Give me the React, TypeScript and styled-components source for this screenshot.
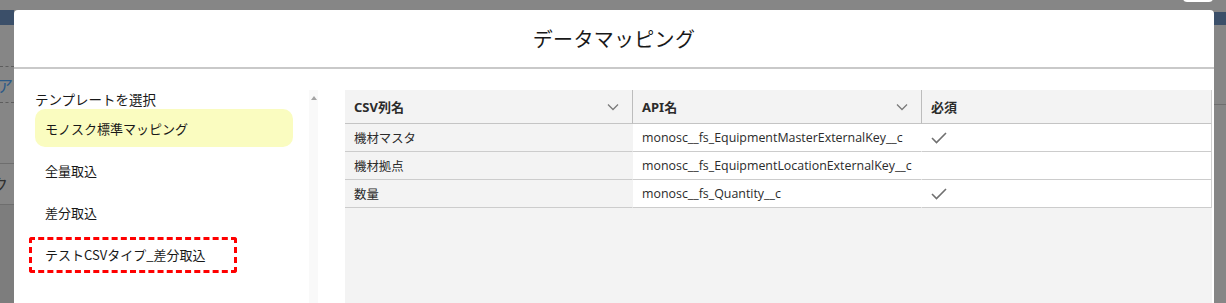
import React from 'react';
import styled, { createGlobalStyle } from 'styled-components';

const GlobalStyle = createGlobalStyle`
  html, body {
    margin: 0;
    padding: 0;
  }
  body {
    font-family: "Noto Sans", "Noto Sans CJK JP", sans-serif;
    color: #181818;
  }
`;

interface MappingRow {
  csv: string;
  api: string;
  required: boolean;
}

const templates = ['モノスク標準マッピング', '全量取込', '差分取込', 'テストCSVタイプ_差分取込'];

const rows: MappingRow[] = [
  { csv: '機材マスタ', api: 'monosc__fs_EquipmentMasterExternalKey__c', required: true },
  { csv: '機材拠点', api: 'monosc__fs_EquipmentLocationExternalKey__c', required: false },
  { csv: '数量', api: 'monosc__fs_Quantity__c', required: true },
];

const Screen = styled.div`
  position: relative;
  width: 1226px;
  height: 303px;
  overflow: hidden;
  background: #868686;
  display: grid;
  grid-template-columns: 14px 1200px 12px;
  padding-top: 10px;
  box-sizing: border-box;
`;

const BackStrip = styled.div`
  display: flex;
  flex-direction: column;
  margin-top: -10px;
  height: 303px;
  overflow: hidden;
  font-size: 16px;
`;

const BackBlock = styled.div<{ h: number; bg?: string; line?: string; dashed?: boolean }>`
  height: ${(p) => p.h}px;
  flex: none;
  background: ${(p) => p.bg || 'transparent'};
  border-bottom: ${(p) => (p.line ? `1px ${p.dashed ? 'dashed' : 'solid'} ${p.line}` : 'none')};
  display: flex;
  align-items: center;
  overflow: hidden;
  white-space: nowrap;
`;

const BackGlyph = styled.span<{ color: string; shift: number }>`
  color: ${(p) => p.color};
  margin-left: ${(p) => p.shift}px;
  font-family: "Noto Sans CJK JP", sans-serif;
  font-size: 16px;
`;

const CloseTab = styled.div`
  position: absolute;
  left: 1183px;
  top: -6px;
  width: 30px;
  height: 8px;
  background: #ffffff;
  border-radius: 4px;
`;

const Modal = styled.div`
  background: #ffffff;
  border-radius: 4px 4px 0 0;
  display: flex;
  flex-direction: column;
  height: 293px;
  overflow: hidden;
`;

const Header = styled.div`
  height: 57px;
  flex: none;
  border-bottom: 2px solid #c9c9c9;
  display: flex;
  align-items: center;
  justify-content: center;
`;

const Title = styled.h2`
  margin: 0;
  font-family: "Noto Sans CJK JP", sans-serif;
  font-weight: 400;
  font-size: 20px;
  letter-spacing: 0.3px;
  color: #181818;
`;

const Body = styled.div`
  flex: 1;
  display: flex;
  min-height: 0;
`;

const Sidebar = styled.div`
  width: 295px;
  flex: none;
  padding: 21px 0 0 21px;
  box-sizing: border-box;
  font-family: "Noto Sans CJK JP", sans-serif;
  font-size: 13px;
`;

const SidebarLabel = styled.div`
  font-size: 13.5px;
  line-height: 19px;
  color: #181818;
`;

const TemplateList = styled.ul`
  list-style: none;
  margin: 0;
  padding: 0;
  display: flex;
  flex-direction: column;
  gap: 4px;
`;

const TemplateItem = styled.li<{ selected?: boolean }>`
  width: 258px;
  height: 38px;
  box-sizing: border-box;
  padding-left: 10px;
  display: flex;
  align-items: center;
  border-radius: 10px;
  background: ${(p) => (p.selected ? '#fafcc0' : 'transparent')};
  color: #181818;
`;

const Annotated = styled.span`
  display: flex;
  align-items: center;
  width: 208px;
  height: 36px;
  box-sizing: border-box;
  margin-left: -16px;
  margin-top: 1px;
  padding-left: 13px;
  border: 3px dashed #ff0000;
  border-radius: 3px;
`;

const ScrollTrack = styled.div`
  width: 9px;
  flex: none;
  margin-top: 21px;
  background: #f9f9f9;
  display: flex;
  justify-content: center;
  padding-top: 6px;
`;

const ScrollArrow = styled.div`
  width: 0;
  height: 0;
  border-left: 3.5px solid transparent;
  border-right: 3.5px solid transparent;
  border-bottom: 4px solid #a3a3a3;
`;

const TableArea = styled.div`
  margin: 21px 0 0 27px;
  width: 867px;
  flex: none;
  background: #f3f3f3;
`;

const Table = styled.div`
  display: grid;
  grid-template-columns: 288px 289px 290px;
  font-size: 13px;
`;

const HeadCell = styled.div<{ divider?: boolean }>`
  height: 34px;
  box-sizing: border-box;
  border-bottom: 1px solid #c4c4c4;
  border-right: 1px solid ${(p) => (p.divider ? '#bcbcbc' : '#cfcfcf')};
  padding: 0 13px 0 9px;
  display: flex;
  align-items: center;
  justify-content: space-between;
  font-weight: 700;
  color: #2b2b2b;
  font-family: "Noto Sans", "Noto Sans CJK JP", sans-serif;
`;

const Cell = styled.div<{ tone: 'gray' | 'white'; last?: boolean }>`
  height: 28px;
  box-sizing: border-box;
  border-bottom: 1px solid #cccccc;
  border-right: 1px solid ${(p) => (p.last ? '#d0d0d0' : 'transparent')};
  background: ${(p) => (p.tone === 'gray' ? '#f3f3f3' : '#ffffff')};
  padding-left: 9px;
  display: flex;
  align-items: center;
  color: #2b2b2b;
  font-family: "Open Sans", "Noto Sans CJK JP", sans-serif;
  font-size: 12.4px;
  white-space: nowrap;
`;

const Chevron = () => (
  <svg width="12" height="8" viewBox="0 0 12 8" fill="none">
    <path d="M1 1.5 L6 6.5 L11 1.5" stroke="#7a7a7a" strokeWidth="1.3" />
  </svg>
);

const Check = () => (
  <svg width="16" height="12" viewBox="0 0 16 12" fill="none">
    <path d="M1 6 L5.5 10.5 L15 1" stroke="#707070" strokeWidth="1.6" />
  </svg>
);

const App: React.FC = () => {
  return (
    <>
      <GlobalStyle />
      <Screen>
        <BackStrip>
          <BackBlock h={10} />
          <BackBlock h={15} bg="#3b4f69" />
          <BackBlock h={41} line="#5d5d5d" dashed />
          <BackBlock h={35} line="#5d5d5d" dashed>
            <BackGlyph color="#2c5a86" shift={-3}>ア</BackGlyph>
          </BackBlock>
          <BackBlock h={60} line="#6e6e6e" />
          <BackBlock h={40} line="#6e6e6e">
            <BackGlyph color="#303030" shift={-8}>ク</BackGlyph>
          </BackBlock>
          <BackBlock h={100} bg="#7d7d7d" />
        </BackStrip>
        <CloseTab />
        <Modal>
          <Header>
            <Title>データマッピング</Title>
          </Header>
          <Body>
            <Sidebar>
              <SidebarLabel>テンプレートを選択</SidebarLabel>
              <TemplateList>
                {templates.map((name, index) => (
                  <TemplateItem key={name} selected={index === 0}>
                    {index === templates.length - 1 ? <Annotated>{name}</Annotated> : name}
                  </TemplateItem>
                ))}
              </TemplateList>
            </Sidebar>
            <ScrollTrack>
              <ScrollArrow />
            </ScrollTrack>
            <TableArea>
              <Table>
                <HeadCell divider>
                  CSV列名
                  <Chevron />
                </HeadCell>
                <HeadCell divider>
                  API名
                  <Chevron />
                </HeadCell>
                <HeadCell>必須</HeadCell>
                {rows.map((row) => (
                  <React.Fragment key={row.api}>
                    <Cell tone="gray">{row.csv}</Cell>
                    <Cell tone="white">{row.api}</Cell>
                    <Cell tone="white" last>
                      {row.required && <Check />}
                    </Cell>
                  </React.Fragment>
                ))}
              </Table>
            </TableArea>
          </Body>
        </Modal>
        <BackStrip>
          <BackBlock h={12} />
          <BackBlock h={13} bg="#3b4f69" />
          <BackBlock h={79} line="#6e6e6e" />
          <BackBlock h={199} />
        </BackStrip>
      </Screen>
    </>
  );
};

export default App;
